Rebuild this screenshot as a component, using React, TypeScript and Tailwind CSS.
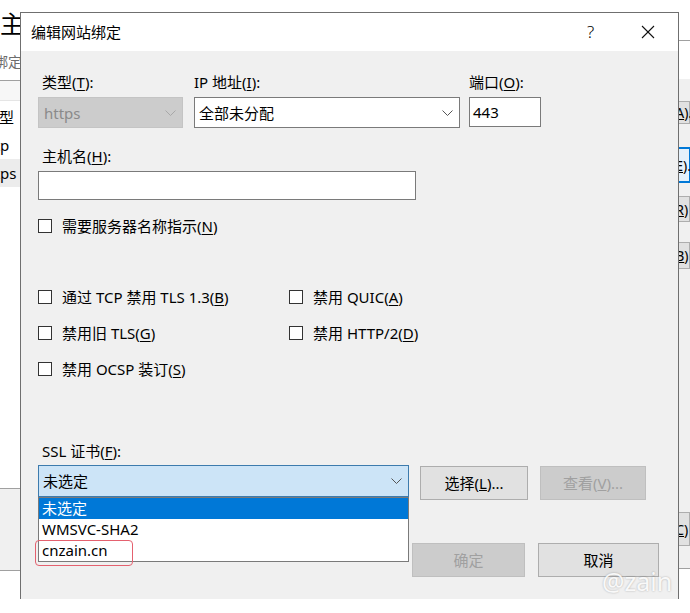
import type { ReactNode } from "react";

const Chevron = ({ className }: { className: string }) => (
  <svg viewBox="0 0 11 6" className={className} fill="none" stroke="currentColor" strokeWidth="1">
    <polyline points="0.5,0.5 5.5,5.5 10.5,0.5" />
  </svg>
);

const Check = ({ children }: { children: ReactNode }) => (
  <div className="flex items-center h-[20px]">
    <span className="w-[14px] h-[14px] border border-[#333333] bg-white shrink-0" />
    <span className="ml-[10px] whitespace-nowrap">{children}</span>
  </div>
);

const Key = ({ k }: { k: string }) => (
  <>
    (<u className="underline-offset-2">{k}</u>)
  </>
);

const SideButton = ({ label, className }: { label: ReactNode; className: string }) => (
  <div className={`border flex items-center pl-[20px] whitespace-nowrap ${className}`}>{label}</div>
);

export default function App() {
  return (
    <div className="relative w-[690px] h-[613px] overflow-hidden bg-white text-black font-['Noto_Sans','Noto_Sans_CJK_SC',sans-serif]">
      {/* window behind the dialog */}
      <div className="flex h-full">
        <div className="w-[40px] flex flex-col overflow-hidden whitespace-nowrap">
          <div className="pt-[9px] text-[24px] leading-[30px]">主页</div>
          <div className="mt-[13px] -ml-[6px] text-[14px] leading-[20px] text-[#6d6d6d]">绑定</div>
          <div className="mt-[8px] h-[21px] border-t border-b border-t-[#a0a0a0] border-b-[#e5e5e5] bg-[#f7f7f7]" />
          <div className="mt-[2px] flex flex-col text-[15px]">
            <div className="h-[28px] leading-[28px] -ml-[16px]">类型</div>
            <div className="h-[28px] leading-[28px] -ml-[20px]">http</div>
            <div className="h-[28px] leading-[28px] bg-[#ececec]">
              <span className="-ml-[20px] inline-block">https</span>
            </div>
          </div>
          <div className="h-[301px]" />
          <div className="h-[83px] border-y border-[#a0a0a0] bg-[#f0f0f0]" />
        </div>
        <div className="flex-1" />
        <div className="w-[40px] flex flex-col overflow-hidden text-[14px]">
          <div className="h-[41px] border-b border-[#a0a0a0]" />
          <div className="mt-[38px] h-[490px] bg-[#f0f0f0] border-b border-[#a0a0a0] flex flex-col">
            <SideButton className="mt-[22px] h-[23px] bg-[#e1e1e1] border-[#adadad]" label={<>(<u>A</u>)...</>} />
            <SideButton className="mt-[23px] h-[36px] bg-[#e5f1fb] border-[#0078d7] border-y-2" label={<>(<u>E</u>)...</>} />
            <SideButton className="mt-[13px] h-[26px] bg-[#e1e1e1] border-[#adadad]" label={<>(<u>R</u>)</>} />
            <SideButton className="mt-[20px] h-[27px] bg-[#e1e1e1] border-[#adadad]" label={<>(<u>B</u>)</>} />
            <SideButton className="mt-[243px] h-[34px] bg-[#e1e1e1] border-[#adadad]" label={<>(<u>C</u>)</>} />
          </div>
        </div>
      </div>

      {/* dialog */}
      <div className="absolute left-[20px] top-[12px] w-[659px] h-[587px] border-x border-t border-[#6f6f6f] bg-[#f0f0f0] flex flex-col">
        <div className="h-[38px] bg-white flex items-center shrink-0">
          <span className="pl-[10px] text-[15px] leading-[20px]">编辑网站绑定</span>
          <div className="ml-auto flex h-full pr-[2px]">
            <span className="w-[57px] flex items-center justify-center text-[17px] font-light">?</span>
            <span className="w-[57px] flex items-center justify-center">
              <svg viewBox="0 0 14 14" className="w-[14px] h-[14px]" stroke="#111" strokeWidth="1.1">
                <line x1="1" y1="1" x2="13" y2="13" />
                <line x1="13" y1="1" x2="1" y2="13" />
              </svg>
            </span>
          </div>
        </div>

        <div className="flex-1 pl-[17px] pt-[21px] text-[15px] leading-[20px]">
          <div className="flex">
            <div className="w-[145px]">
              <div className="pl-[4px]">类型<Key k="T" />:</div>
              <div className="mt-[5px] h-[31px] border border-[#c4c4c4] bg-[#cccccc] flex items-center pl-[5px] pr-[6px] text-[#8a8a8a]">
                https
                <Chevron className="ml-auto w-[11px] h-[6px] text-[#a8a8a8]" />
              </div>
            </div>
            <div className="ml-[11px] w-[266px]">
              <div>IP 地址<Key k="I" />:</div>
              <div className="mt-[5px] h-[31px] border border-[#7a7a7a] bg-white flex items-center pl-[4px] pr-[6px]">
                全部未分配
                <Chevron className="ml-auto w-[11px] h-[6px] text-[#555555]" />
              </div>
            </div>
            <div className="ml-[9px] w-[72px]">
              <div>端口<Key k="O" />:</div>
              <div className="mt-[5px] h-[30px] border border-[#7a7a7a] bg-white flex items-center pl-[3px]">443</div>
            </div>
          </div>

          <div className="mt-[18px] pl-[4px]">主机名<Key k="H" />:</div>
          <div className="mt-[5px] w-[378px] h-[29px] border border-[#7a7a7a] bg-white" />

          <div className="mt-[16px]">
            <Check>需要服务器名称指示<Key k="N" /></Check>
          </div>

          <div className="mt-[51px] grid grid-cols-[251px_1fr] gap-y-[16px]">
            <Check>通过 TCP 禁用 TLS 1.3<Key k="B" /></Check>
            <Check>禁用 QUIC<Key k="A" /></Check>
            <Check>禁用旧 TLS<Key k="G" /></Check>
            <Check>禁用 HTTP/2<Key k="D" /></Check>
            <Check>禁用 OCSP 装订<Key k="S" /></Check>
          </div>

          <div className="mt-[62px] pl-[4px]">SSL 证书<Key k="F" />:</div>
          <div className="mt-[4px] flex items-start">
            <div className="relative w-[371px]">
              <div className="h-[32px] border border-[#3d7bad] bg-[#cce4f7] flex items-center pl-[4px] pr-[6px]">
                未选定
                <Chevron className="ml-auto w-[11px] h-[6px] text-[#555555]" />
              </div>
              <div className="absolute left-0 top-[32px] w-[371px] border border-[#7a7a7a] bg-white">
                <div className="h-[21px] leading-[21px] pl-[3px] bg-[#0078d7] text-white">未选定</div>
                <div className="h-[21px] leading-[21px] pl-[3px]">WMSVC-SHA2</div>
                <div className="h-[21px] leading-[21px] pl-[3px]">cnzain.cn</div>
              </div>
              <div className="absolute left-[-3px] top-[75px] w-[98px] h-[26px] border border-[#e4616f] rounded-[4px]" />
            </div>
            <div className="ml-[11px] mt-[1px] w-[108px] h-[34px] border border-[#adadad] bg-[#e1e1e1] flex items-center justify-center">
              选择(<u>L</u>)...
            </div>
            <div className="ml-[12px] mt-[1px] w-[106px] h-[34px] border border-[#bfbfbf] bg-[#cccccc] flex items-center justify-center text-[#a0a0a0]">
              查看(<u>V</u>)...
            </div>
          </div>

          <div className="mt-[43px] flex justify-end pr-[19px] gap-[13px]">
            <div className="w-[113px] h-[34px] border border-[#bfbfbf] bg-[#cccccc] flex items-center justify-center text-[#a0a0a0]">确定</div>
            <div className="w-[121px] h-[34px] border border-[#adadad] bg-[#e1e1e1] flex items-center justify-center">取消</div>
          </div>
        </div>
      </div>

      {/* watermark */}
      <div className="absolute left-[602px] top-[566px] text-[25px] leading-[30px] text-white/90 [text-shadow:0_0_2px_rgba(0,0,0,0.3)]">
        @zain
      </div>
    </div>
  );
}
